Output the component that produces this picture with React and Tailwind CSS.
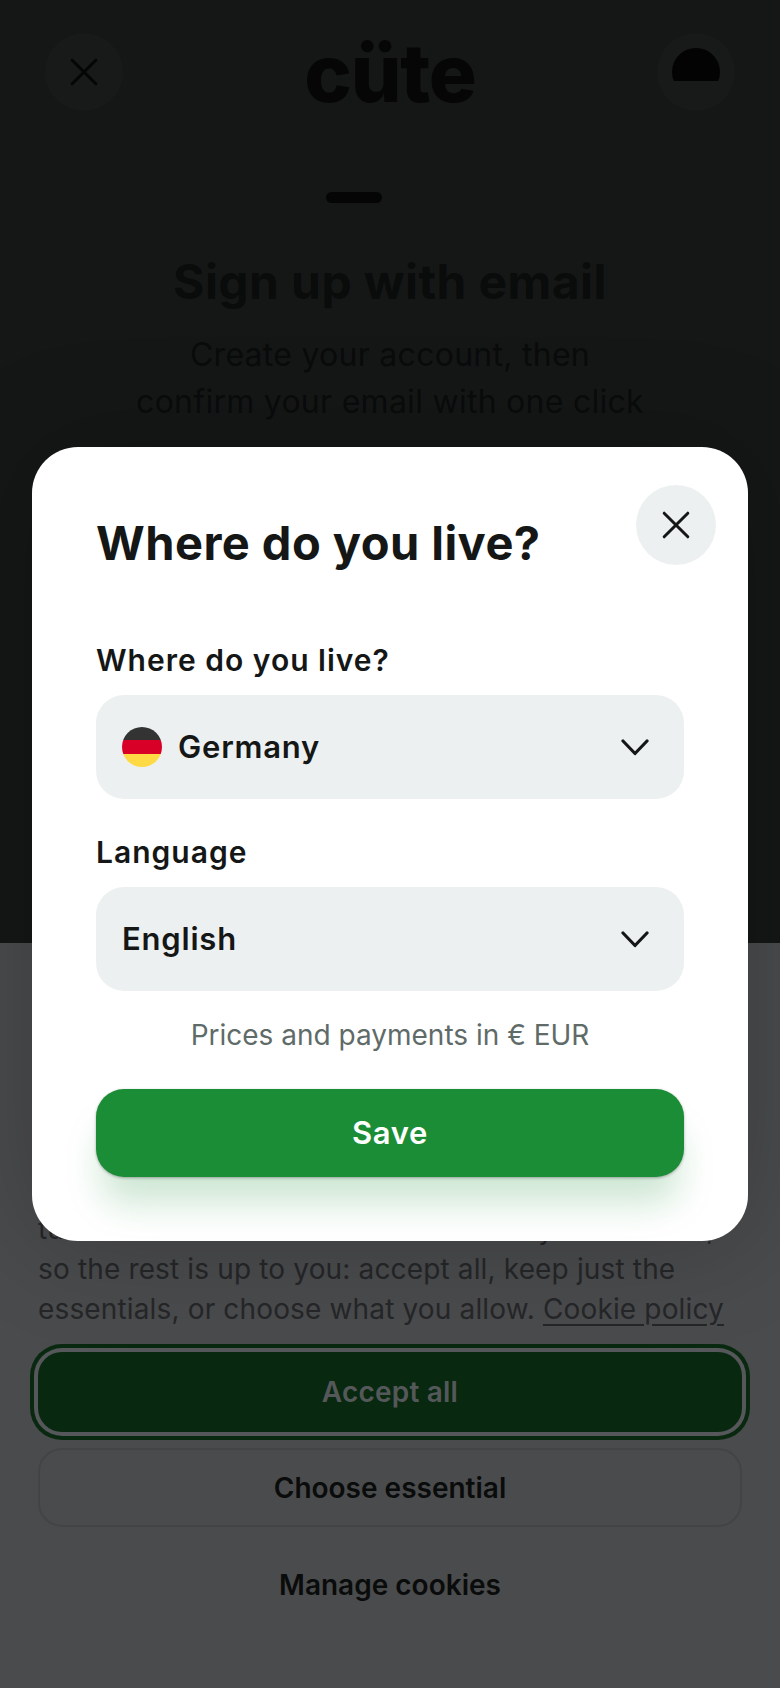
import React from "react";

const font = { fontFamily: "Inter, 'Noto Sans', sans-serif" };

function Cross({ className, w = 2.4 }) {
  return (
    <svg viewBox="0 0 32 32" className={className} fill="none" stroke="currentColor" strokeWidth={w} strokeLinecap="round">
      <path d="M2.5 2.5 L29.5 29.5" />
      <path d="M29.5 2.5 L2.5 29.5" />
    </svg>
  );
}

function Chevron() {
  return (
    <svg viewBox="0 0 28 17" className="w-7 h-[17px] text-[#151717]" fill="none" stroke="currentColor" strokeWidth="3.2" strokeLinecap="round" strokeLinejoin="round">
      <path d="M2 2 L14 14.5 L26 2" />
    </svg>
  );
}

function Flag() {
  return (
    <div className="w-10 h-10 rounded-full overflow-hidden flex flex-col shrink-0">
      <div className="h-[13px] bg-[#333333]" />
      <div className="h-[14px] bg-[#d80027]" />
      <div className="h-[13px] bg-[#ffda44]" />
    </div>
  );
}

function Field({ label, className, children }) {
  return (
    <div className={className}>
      <div className="text-[30px] leading-[36px] font-semibold text-[#151717] tracking-[1px]">{label}</div>
      <div className="mt-[17px] h-[104px] rounded-[28px] bg-[#edf0f1] flex items-center justify-between pl-[26px] pr-[35px]">
        <div className="flex items-center gap-4 text-[31px] font-semibold text-[#151717] tracking-[0.8px]">{children}</div>
        <Chevron />
      </div>
    </div>
  );
}

export default function App() {
  return (
    <div style={font} className="relative w-[780px] h-[1688px] overflow-hidden flex flex-col bg-[#4a4b4d]">
      <section className="h-[943px] shrink-0 bg-[#151717] flex flex-col items-center relative">
        <header className="w-full flex items-center justify-between px-[45px] pt-[33px]">
          <div className="w-[78px] h-[78px] rounded-full bg-[#181a1a] flex items-center justify-center text-[#050505]">
            <Cross className="w-7 h-7" w={3.4} />
          </div>
          <div className="h-[78px] text-[80px] leading-[79px] font-extrabold text-[#060606] tracking-[-1.2px]">cüte</div>
          <div className="w-[78px] h-[78px] rounded-full bg-[#181a1a] flex items-start justify-center pt-[15px]">
            <div className="w-12 h-12 rounded-full overflow-hidden">
              <div className="h-[33px] bg-[#030303]" />
            </div>
          </div>
        </header>
        <div className="mt-[81px] ml-[326px] self-start w-14 h-[11px] rounded-full bg-[#050505]" />
        <h1 className="mt-[51px] text-[48px] leading-[56px] font-bold text-[#0a0b0b] tracking-[0.4px]">Sign up with email</h1>
        <p className="mt-[21px] text-[32px] leading-[47px] text-[#0a0b0b] text-center tracking-[0.27px]">
          Create your account, then
          <br />
          confirm your email with one click
        </p>
      </section>

      <section className="flex-1 flex flex-col relative px-[38px]">
        <p className="mt-[266px] text-[28px] leading-[40px] text-[#252628] whitespace-nowrap tracking-[0.15px]">
          turned on all the cookies the site really needs now,
          <br />
          so the rest is up to you: accept all, keep just the
          <br />
          essentials, or choose what you allow. <span className="underline underline-offset-[5px]">Cookie policy</span>
        </p>
        <button className="mt-[23px] h-[80px] rounded-[24px] bg-[#08280f] text-[#55585a] text-[28px] font-semibold tracking-[0.2px] shadow-[0_0_0_4px_#55575a,0_0_0_8px_#08280f] flex items-center justify-center">
          Accept all
        </button>
        <button className="mt-4 h-[79px] rounded-[24px] border-2 border-[#434446] text-[#0a0b0b] text-[28px] font-semibold flex items-center justify-center">
          Choose essential
        </button>
        <button className="mt-[18px] h-[80px] text-[#0a0b0b] text-[28px] font-semibold flex items-center justify-center">
          Manage cookies
        </button>
      </section>

      <div className="absolute left-8 top-[447px] w-[716px] h-[794px] bg-white rounded-[46px] shadow-[0_0_110px_rgba(0,0,0,0.22)] px-16 pt-[68px]">
        <button className="absolute right-8 top-[38px] w-20 h-20 rounded-full bg-[#edf0f1] flex items-center justify-center text-[#151717]">
          <Cross className="w-7 h-7" w={3.4} />
        </button>
        <h2 className="text-[47px] leading-[56px] font-bold text-[#151717] tracking-[0.45px]">Where do you live?</h2>
        <Field label="Where do you live?" className="mt-[71px]">
          <Flag />
          <span>Germany</span>
        </Field>
        <Field label="Language" className="mt-[35px]">
          <span>English</span>
        </Field>
        <p className="mt-[26px] text-center text-[28px] leading-[36px] text-[#5f6b68]">Prices and payments in € EUR</p>
        <button className="mt-[36px] w-full h-[88px] rounded-[28px] bg-[#1a8d36] text-white text-[31px] font-semibold tracking-[0.6px] shadow-[0_1px_3px_rgba(0,0,0,0.3),0_32px_36px_-6px_rgba(26,141,54,0.22)] flex items-center justify-center">
          Save
        </button>
      </div>
    </div>
  );
}
